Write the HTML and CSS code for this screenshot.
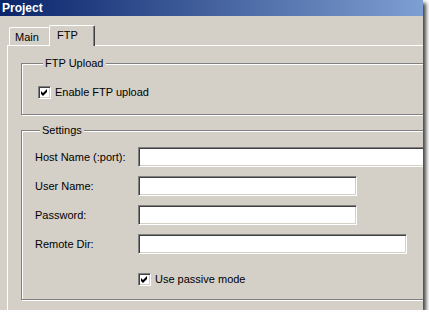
FILE: index.html
```html
<!DOCTYPE html>
<html lang="en">
<head>
    <meta charset="UTF-8">
    <meta name="viewport" content="width=device-width, initial-scale=1.0">
    <title>Project</title>
    <link rel="stylesheet" href="styles.css">
</head>
<body>

<div class="window">
    <div class="titlebar">Project</div>

    <!-- tab strip -->
    <div class="tabs">
        <div class="tab">Main</div>
        <div class="tab active">FTP</div>
    </div>

    <div class="panel">
        <fieldset class="group group-upload">
            <legend>FTP Upload</legend>
            <label class="check-row">
                <span class="checkbox">
                    <svg width="9" height="9" viewBox="0 0 9 9"><polygon points="1,3 3,5 7,1 7,4 3,8 1,6" fill="#000"/></svg>
                </span>
                Enable FTP upload
            </label>
        </fieldset>

        <fieldset class="group group-settings">
            <legend>Settings</legend>
            <div class="form-grid">
                <label for="host">Host Name (:port):</label>
                <input type="text" id="host" class="field field-host">

                <label for="user">User Name:</label>
                <input type="text" id="user" class="field field-short">

                <label for="pass">Password:</label>
                <input type="password" id="pass" class="field field-short">

                <label for="dir">Remote Dir:</label>
                <input type="text" id="dir" class="field field-dir">

                <span></span>
                <label class="check-row passive">
                    <span class="checkbox">
                        <svg width="9" height="9" viewBox="0 0 9 9"><polygon points="1,3 3,5 7,1 7,4 3,8 1,6" fill="#000"/></svg>
                    </span>
                    Use passive mode
                </label>
            </div>
        </fieldset>
    </div>
</div>

</body>
</html>
```

FILE: styles.css
```css
body {
    margin: 0;
    padding: 0;
    background-color: #fff;
    font-family: "Liberation Sans", Arial, sans-serif;
    font-size: 11px;
    color: #000;
}

.window {
    width: 423px;
    height: 310px;
    background-color: #d4d0c8;
    overflow: hidden;
    display: flex;
    flex-direction: column;
    box-shadow: 3px 3px 4px rgba(0, 0, 0, 0.75);
}

.titlebar {
    height: 16px;
    line-height: 16px;
    padding-left: 2px;
    font-size: 12px;
    font-weight: bold;
    color: #fff;
    background: linear-gradient(to right, #0a246a, #7e9fd2);
}

/* tabs */
.tabs {
    display: flex;
    align-items: flex-end;
    margin: 9px 0 0 9px;
}
.tab {
    box-sizing: border-box;
    height: 18px;
    width: 40px;
    padding: 3px 0 0 5px;
    line-height: 13px;
    border-top: 1px solid #fff;
    border-left: 1px solid #fff;
    border-radius: 2px 2px 0 0;
}
.tab.active {
    position: relative;
    z-index: 1;
    width: 46px;
    height: 21px;
    margin-bottom: -1px;
    padding-left: 7px;
    background-color: #d4d0c8;
    border-right: 1px solid #404040;
    box-shadow: inset -1px 0 #808080;
}

.panel {
    flex: 1;
    width: 430px;
    margin-left: 7px;
    border-top: 1px solid #fff;
    border-left: 1px solid #fff;
}

/* group boxes */
.group {
    width: 420px;
    margin: 0 0 0 13px;
    padding: 0;
    min-width: 0;
    border: 1px solid #808080;
    box-shadow: inset 1px 1px #fff, 1px 1px #fff;
}
.group legend {
    margin-left: 5px;
    padding: 0 2px;
    line-height: 13px;
    background-color: #d4d0c8;
}
.group-upload {
    margin-top: 11px;
    padding: 16px 0 15px 16px;
}
.group-settings {
    margin-top: 9px;
    padding: 10px 0 13px 13px;
}

.check-row {
    display: flex;
    align-items: center;
    gap: 4px;
    height: 13px;
    line-height: 13px;
}
.checkbox {
    box-sizing: border-box;
    width: 13px;
    height: 13px;
    display: flex;
    align-items: center;
    justify-content: center;
    background-color: #fff;
    border: 1px solid;
    border-color: #808080 #fff #fff #808080;
    box-shadow: inset 1px 1px #404040, inset -1px -1px #d4d0c8;
}

.form-grid {
    display: grid;
    grid-template-columns: 103px auto;
    row-gap: 9px;
    align-items: center;
}
.form-grid .passive {
    margin-top: 10px;
}

.field {
    box-sizing: border-box;
    height: 20px;
    margin: 0;
    padding: 0 2px;
    font-family: inherit;
    font-size: 11px;
    background-color: #fff;
    border: 1px solid;
    border-color: #808080 #fff #fff #808080;
    box-shadow: inset 1px 1px #404040, inset -1px -1px #d4d0c8;
    outline: none;
}
.field-host {
    width: 300px;
}
.field-short {
    width: 219px;
}
.field-dir {
    width: 269px;
}
```
